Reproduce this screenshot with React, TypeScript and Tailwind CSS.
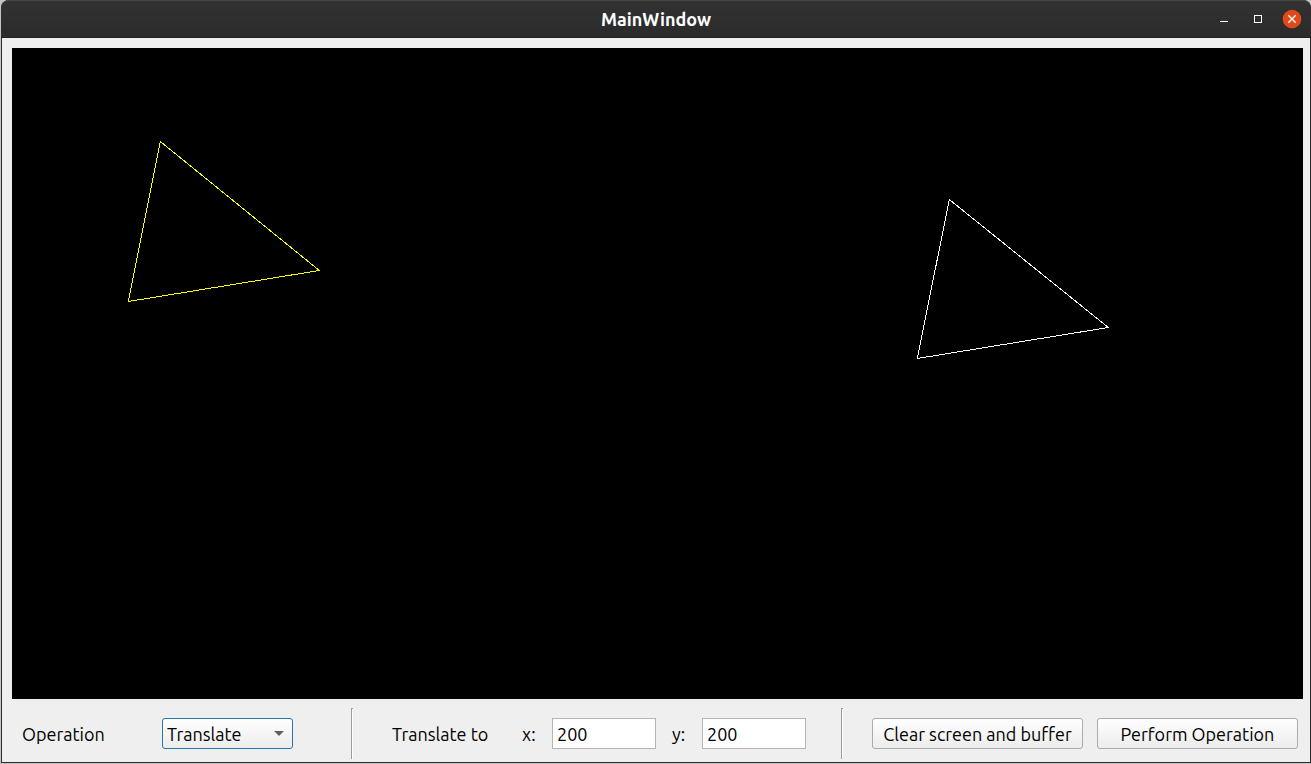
import { useState } from "react";

type Point = [number, number];

const original: Point[] = [
  [148, 93],
  [307, 222],
  [116, 253],
];

const translated: Point[] = [
  [937, 151],
  [1096, 279],
  [905, 310],
];

function Triangle({ points, color }: { points: Point[]; color: string }) {
  return (
    <polygon
      points={points.map(([x, y]) => `${x + 0.3},${y + 0.5}`).join(" ")}
      fill="none"
      stroke={color}
      strokeWidth="1"
      shapeRendering="crispEdges"
    />
  );
}

function TitleBar() {
  return (
    <header className="grid h-[38px] shrink-0 grid-cols-[1fr_auto_1fr] items-center rounded-t-lg border-t border-b border-t-[#444] border-b-[#222] bg-linear-to-b from-[#323232] to-[#2b2b2b]">
      <h1 className="col-start-2 text-[18px] leading-6 font-bold text-white">MainWindow</h1>
      <div className="flex justify-end gap-4 pr-[10px]">
        <button type="button" aria-label="Minimize" className="size-[18px]">
          <svg viewBox="0 0 18 18" className="size-[18px]" shapeRendering="crispEdges">
            <rect x="5" y="11" width="8" height="1" fill="#fff" />
          </svg>
        </button>
        <button type="button" aria-label="Maximize" className="size-[18px]">
          <svg viewBox="0 0 18 18" className="size-[18px]" shapeRendering="crispEdges">
            <rect x="5.5" y="5.5" width="7" height="7" fill="none" stroke="#fff" />
          </svg>
        </button>
        <button type="button" aria-label="Close" className="size-[18px]">
          <svg viewBox="0 0 18 18" className="size-[18px] overflow-visible">
            <circle cx="9" cy="9" r="9.3" fill="#e2491a" />
            <path d="M5.3 5.3 12.7 12.7M12.7 5.3 5.3 12.7" stroke="#fff" strokeWidth="1.3" />
          </svg>
        </button>
      </div>
    </header>
  );
}

function Separator() {
  return <div className="h-[51px] w-[2px] shrink-0 border-t border-l border-[#9c9c9c] bg-white" />;
}

function CoordinateField({ label, id }: { label: string; id: string }) {
  const [value, setValue] = useState("200");
  return (
    <div className="flex items-center">
      <label htmlFor={id} className="w-[30px]">
        {label}
      </label>
      <input
        id={id}
        type="text"
        value={value}
        onChange={(e) => setValue(e.target.value)}
        className="h-[31px] w-[104px] border border-[#b5b5b5] bg-white px-1 outline-none"
      />
    </div>
  );
}

const buttonClass =
  "h-[31px] rounded-[3px] border border-[#ababab] bg-linear-to-b from-white to-[#ececec] whitespace-nowrap";

export default function App() {
  return (
    <div className="min-h-screen bg-[#c4c4c4] pb-px pl-px font-['Ubuntu','Noto_Sans',sans-serif] text-[18px] leading-6 text-black">
      <div className="flex min-h-[calc(100vh-1px)] flex-col rounded-t-lg bg-[#2b2b2b]">
        <TitleBar />
        <main className="mx-px mb-px flex grow flex-col bg-[#efefef]">
          <div className="mt-[10px] mr-[7px] ml-[10px] flex grow overflow-hidden bg-black">
            <svg className="h-[651px] w-full" role="img" aria-label="Drawing area">
              <Triangle points={original} color="#ffff00" />
              <Triangle points={translated} color="#ffffff" />
            </svg>
          </div>
          <form
            className="flex h-[63px] shrink-0 items-center pt-[6px] pr-3 pl-5"
            onSubmit={(e) => e.preventDefault()}
          >
            <label htmlFor="operation" className="w-[140px] shrink-0">
              Operation
            </label>
            <div className="relative mr-[58px] shrink-0">
              <select
                id="operation"
                className="block h-[31px] w-[131px] appearance-none rounded-[3px] border border-[#2778a9] bg-linear-to-b from-white to-[#ececec] px-1 outline-none"
              >
                <option>Translate</option>
              </select>
              <svg
                viewBox="0 0 10 5"
                className="pointer-events-none absolute top-[13px] right-[9px] h-[5px] w-[10px]"
              >
                <path d="M0 0h10L5 5z" fill="#606060" />
              </svg>
            </div>
            <Separator />
            <fieldset className="ml-[39px] flex items-center">
              <span className="w-[130px]">Translate to</span>
              <div className="flex gap-4">
                <CoordinateField id="target-x" label="x:" />
                <CoordinateField id="target-y" label="y:" />
              </div>
            </fieldset>
            <div className="ml-[35px]">
              <Separator />
            </div>
            <div className="ml-auto flex gap-[14px]">
              <button type="button" className={`${buttonClass} w-[211px]`}>
                Clear screen and buffer
              </button>
              <button type="submit" className={`${buttonClass} w-[201px]`}>
                Perform Operation
              </button>
            </div>
          </form>
        </main>
      </div>
    </div>
  );
}
